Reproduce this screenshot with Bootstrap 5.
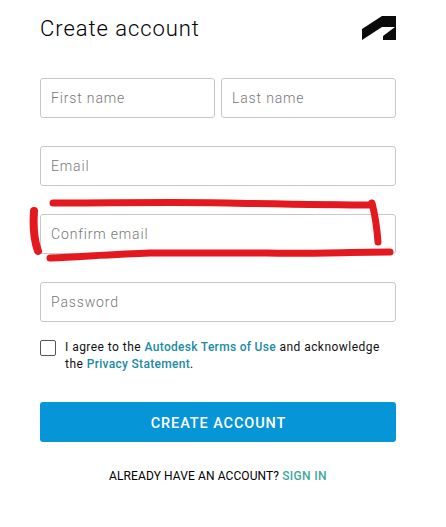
<!doctype html>
<html lang="en"><head><meta charset="utf-8"><title>Create account</title>
<link href="https://cdn.jsdelivr.net/npm/bootstrap@5.3.0/dist/css/bootstrap.min.css" rel="stylesheet">
<style>
html,body{height:527px;overflow:hidden;background:#fff}
body{font-family:Roboto,"Liberation Sans",sans-serif;color:#000}
.sheet{position:relative;width:446px;height:527px;padding:16px 50px 0 40px}
.title-row{height:24px;margin-bottom:38px}
.page-title{font-size:22px;font-weight:300;letter-spacing:.95px;line-height:26px;margin:0;color:#000}
.logo{width:34px;height:24px;display:block}
.stack{display:flex;flex-direction:column;gap:28px}
.pair{display:grid;grid-template-columns:175px 175px;gap:6px}
.form-control.field{height:40px;border:1px solid #c8c8c8;border-radius:3px;font-size:14px;font-weight:300;letter-spacing:.85px;padding:0 10px;box-shadow:none}
.field::placeholder{color:#777;opacity:1}
.agree{display:flex;gap:9px;margin-top:18px;height:34px}
.form-check-input.box{width:16px;height:16px;margin:0;flex:none;border:1px solid #555;border-radius:2px;margin-top:0}
.agree-text{font-size:12px;line-height:17px;letter-spacing:.46px;margin-top:-1px;color:#111}
.agree-text a{color:#1b8aa6;font-weight:500;text-decoration:none;letter-spacing:.3px}
.btn.go{display:block;width:100%;height:40px;margin-top:28px;background:#0696d7;border:0;border-radius:3px;color:#fff;font-size:14.5px;font-weight:500;letter-spacing:.9px;padding:4px 0 0 1px}
.signin{margin-top:26px;text-align:center;font-size:12px;line-height:16px;letter-spacing:.1px;color:#000}
.signin a{color:#3fa89c;font-weight:500;text-decoration:none;letter-spacing:.35px}
.scribble{position:absolute;left:0;top:0;width:446px;height:527px;pointer-events:none}
</style></head>
<body>
<div class="sheet">
  <div class="title-row d-flex justify-content-between align-items-start">
    <h1 class="page-title">Create account</h1>
    <svg class="logo" viewBox="0 0 34 24" aria-label="Autodesk"><path fill-rule="evenodd" d="M0 13 20 0H34V24H21V20L33 11H20L0 24Z" fill="#0a0a0a"/></svg>
  </div>
  <form class="stack">
    <div class="pair">
      <input class="form-control field" placeholder="First name">
      <input class="form-control field" placeholder="Last name">
    </div>
    <input class="form-control field" placeholder="Email">
    <input class="form-control field" placeholder="Confirm email">
    <input class="form-control field" placeholder="Password">
  </form>
  <div class="agree">
    <input class="form-check-input box" type="checkbox" aria-label="agree">
    <div class="agree-text">I agree to the <a href="#">Autodesk Terms of Use</a> and acknowledge the <a href="#">Privacy Statement</a>.</div>
  </div>
  <button class="btn go" type="button">CREATE ACCOUNT</button>
  <div class="signin">ALREADY HAVE AN ACCOUNT? <a href="#">SIGN IN</a></div>
  <svg class="scribble" viewBox="0 0 446 527" fill="none" stroke="#e3191f" stroke-linecap="round" stroke-linejoin="round" aria-hidden="true">
    <path stroke-width="7" d="M53 203C110 203 180 202 227 203C280 204 330 205 372 205"/>
    <path stroke-width="7" d="M372 203C375 215 377 228 378 242"/>
    <path stroke-width="8" d="M34 211C33 225 34 240 38 251"/>
    <path stroke-width="7" d="M50 258C90 256 120 254 150 253C200 253 230 253 267 253C310 254 350 252 390 252"/>
  </svg>
</div>
</body></html>
